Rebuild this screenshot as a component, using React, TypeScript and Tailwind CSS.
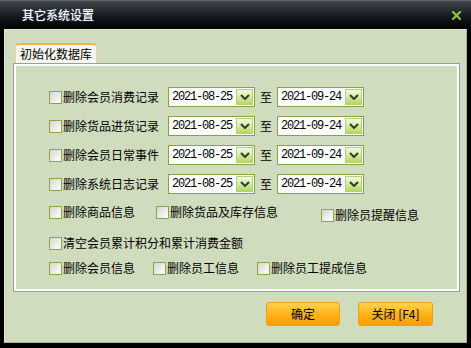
import React from 'react';

const FONT = "font-['Noto_Sans_CJK_SC','Noto_Sans_CJK_JP',sans-serif]";

function CheckBox() {
    return (
        <span className="inline-block w-[13px] h-[13px] shrink-0 border border-[#8ba548] bg-gradient-to-br from-[#d6d6d0] to-[#ffffff]" />
    );
}

function Check({ label, className = '' }: { label: string; className?: string }) {
    return (
        <div className={`flex items-center h-[20px] ${className}`}>
            <CheckBox />
            <span className="ml-[1px] text-[12px] leading-[14px] text-black whitespace-nowrap">{label}</span>
        </div>
    );
}

function DateBox({ value }: { value: string }) {
    return (
        <div className="flex items-center w-[87px] h-[20px] border border-[#84a53a] bg-white pl-[3px] pr-[1px]">
            <span className="flex-1 font-['Liberation_Mono',monospace] text-[12px] tracking-[-1.2px] leading-none text-black">
                {value}
            </span>
            <span className="flex items-center justify-center w-[17px] h-[16px] border border-[#b5cf7c] bg-gradient-to-b from-[#f4fbe0] to-[#b2da5c]">
                <svg width="10" height="6" viewBox="0 0 10 6">
                    <polyline points="1,1 5,5 9,1" fill="none" stroke="#3a3a2a" strokeWidth="2" />
                </svg>
            </span>
        </div>
    );
}

function DateRow({ label }: { label: string }) {
    return (
        <div className="flex items-center h-[20px]">
            <div className="w-[119px] flex items-center">
                <CheckBox />
                <span className="ml-[1px] text-[12px] leading-[14px] text-black whitespace-nowrap">{label}</span>
            </div>
            <DateBox value="2021-08-25" />
            <span className="mx-[5px] text-[12px] leading-[14px] text-black">至</span>
            <DateBox value="2021-09-24" />
        </div>
    );
}

function OrangeButton({ label, className = '' }: { label: string; className?: string }) {
    return (
        <button className={`h-[24px] rounded-[3px] border border-[#f0a010] bg-gradient-to-b from-[#ffd24a] via-[#ffb31a] to-[#ff9c00] text-[12px] leading-none text-black ${className}`}>
            {label}
        </button>
    );
}

export default function App() {
    return (
        <div className={`w-[471px] h-[348px] bg-black flex flex-col ${FONT}`}>
            {/* Title bar */}
            <div className="h-[29px] shrink-0 flex items-center justify-between border-t border-[#60666b] bg-gradient-to-b from-[#42484d] via-[#1a1e22] to-[#020304] pl-[22px] pr-[10px]">
                <span className="text-[12px] leading-none text-white [text-shadow:0_0_1px_#9bc]">其它系统设置</span>
                <svg width="9" height="9" viewBox="0 0 9 9">
                    <path d="M1 1 L8 8 M8 1 L1 8" stroke="#8cc63e" strokeWidth="2.2" strokeLinecap="square" />
                </svg>
            </div>

            {/* Body */}
            <div className="mx-[4px] mb-[5px] flex-1 flex flex-col border border-t-[#e4e8dc] border-l-[#e4e8dc] border-r-[#a8aca0] border-b-[#a8aca0] bg-[#d0dcbe] pt-[13px] pl-[8px] pr-[6px]">
                {/* Tab */}
                <div className="ml-[2px] w-[82px] h-[20px] flex items-center justify-center rounded-t-[4px] border-t-2 border-x border-t-[#f2b34a] border-x-[#ecd49c] bg-[#f6f6ee] text-[12px] leading-none text-black">
                    初始化数据库
                </div>

                {/* Panel */}
                <div className="h-[229px] border border-[#9c9c9c]">
                    <div className="h-full border-2 border-white pl-[33px] pt-[21px] flex flex-col">
                        <div className="flex flex-col gap-[9px]">
                            <DateRow label="删除会员消费记录" />
                            <DateRow label="删除货品进货记录" />
                            <DateRow label="删除会员日常事件" />
                            <DateRow label="删除系统日志记录" />
                        </div>
                        <div className="flex mt-[8px]">
                            <Check label="删除商品信息" className="w-[107px]" />
                            <Check label="删除货品及库存信息" className="w-[165px]" />
                            <Check label="删除员提醒信息" className="mt-[3px]" />
                        </div>
                        <div className="flex mt-[8px]">
                            <Check label="清空会员累计积分和累计消费金额" />
                        </div>
                        <div className="flex mt-[5px]">
                            <Check label="删除会员信息" className="w-[104px]" />
                            <Check label="删除员工信息" className="w-[104px]" />
                            <Check label="删除员工提成信息" />
                        </div>
                    </div>
                </div>

                {/* Buttons */}
                <div className="flex justify-end gap-[18px] mt-[10px] pr-[27px]">
                    <OrangeButton label="确定" className="w-[74px]" />
                    <OrangeButton label="关闭 [F4]" className="w-[75px]" />
                </div>
            </div>
        </div>
    );
}
